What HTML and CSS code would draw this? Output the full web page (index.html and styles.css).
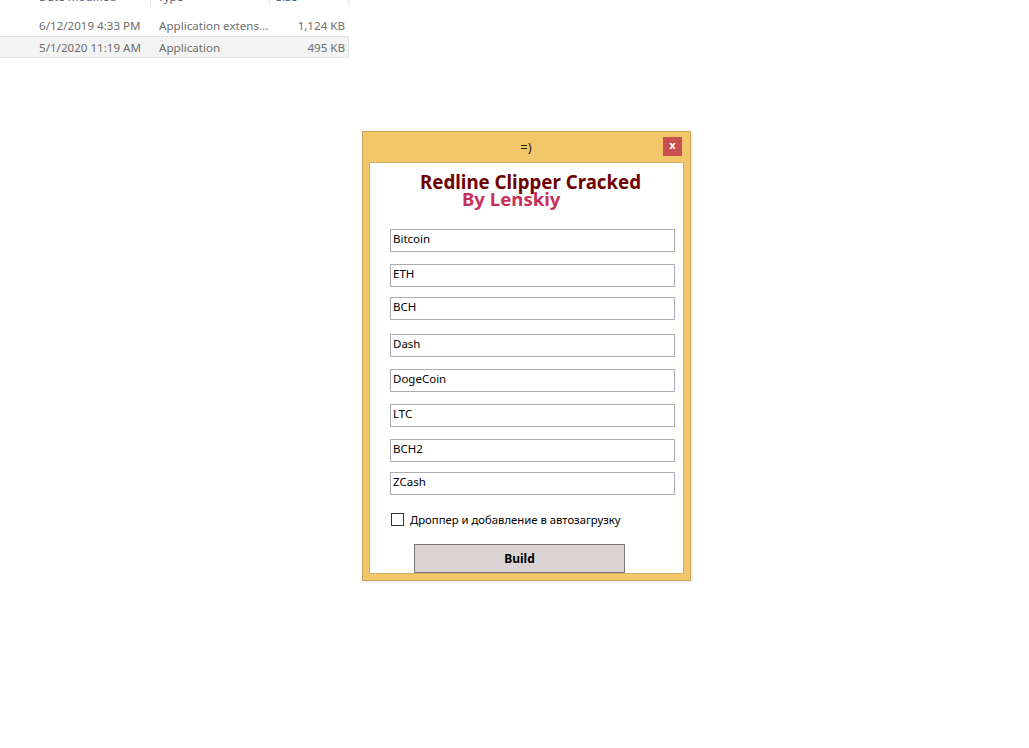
FILE: index.html
```html
<!DOCTYPE html>
<html>
<head>
<meta charset="utf-8">
<link rel="stylesheet" href="styles.css">
</head>
<body>
<div class="explorer">
  <div class="ex-header">
    <span class="col col-date">Date modified</span>
    <span class="col col-type">Type</span>
    <span class="col col-size">Size</span>
  </div>
  <div class="ex-row">
    <span class="col col-date">6/12/2019 4:33 PM</span>
    <span class="col col-type">Application extens...</span>
    <span class="col col-size">1,124 KB</span>
  </div>
  <div class="ex-row selected">
    <span class="col col-date">5/1/2020 11:19 AM</span>
    <span class="col col-type">Application</span>
    <span class="col col-size">495 KB</span>
  </div>
</div>

<div class="window">
  <div class="titlebar">
    <span class="title">=)</span>
    <span class="close">x</span>
  </div>
  <div class="client">
    <div class="heading">Redline Clipper Cracked</div>
    <div class="subheading">By Lenskiy</div>
    <div class="fields">
      <div class="field">Bitcoin</div>
      <div class="field g12">ETH</div>
      <div class="field g10">BCH</div>
      <div class="field g14">Dash</div>
      <div class="field g12">DogeCoin</div>
      <div class="field g12">LTC</div>
      <div class="field g12">BCH2</div>
      <div class="field g10">ZCash</div>
    </div>
    <label class="check"><span class="box"></span><span class="check-label">Дроппер и добавление в автозагрузку</span></label>
    <div class="build">Build</div>
  </div>
</div>
</body>
</html>
```

FILE: styles.css
```css
html, body {
  margin: 0;
  padding: 0;
  background: #ffffff;
  font-family: "Noto Sans", "Open Sans", sans-serif;
}

.explorer {
  margin-top: -7px;
  width: 349px;
  font-size: 11.6px;
  color: #6d6d6d;
}

.ex-header, .ex-row {
  display: flex;
  height: 22px;
  align-items: center;
  box-sizing: border-box;
}

.ex-header {
  height: 16px;
  color: #4c607a;
  align-items: flex-start;
}

.ex-header .col {
  border-right: 1px solid #e5e5e5;
  height: 12px;
  line-height: 8px;
}

.ex-row {
  margin-top: 5px;
}

.ex-row.selected {
  margin-top: 0;
  background: #f3f3f3;
  border: 1px solid #e2e2e2;
  border-left: none;
}

.col {
  box-sizing: border-box;
  white-space: nowrap;
}

.col-date {
  width: 153px;
  padding-left: 39px;
}

.col-type {
  width: 120px;
  padding-left: 6px;
}

.col-size {
  width: 72px;
  text-align: right;
}

.ex-header .col-size {
  width: 80px;
  text-align: left;
  padding-left: 6px;
}

.window {
  position: absolute;
  left: 362px;
  top: 131px;
  width: 329px;
  height: 450px;
  box-sizing: border-box;
  background: #f1c76a;
  border: 1px solid #c9a45b;
  padding: 0 6px 6px 6px;
  display: flex;
  flex-direction: column;
  box-shadow: 1px 1px 3px rgba(0, 0, 0, 0.12);
}

.titlebar {
  height: 30px;
  position: relative;
  display: flex;
  align-items: center;
  justify-content: center;
  flex: none;
}

.title {
  font-family: "Noto Sans", sans-serif;
  font-size: 13px;
  color: #1a1a1a;
  margin-left: -1px;
}

.close {
  position: absolute;
  right: 2px;
  top: 5px;
  width: 19px;
  height: 19px;
  background: #c75050;
  color: #ffffff;
  font-family: "DejaVu Sans", sans-serif;
  font-weight: bold;
  font-size: 10px;
  line-height: 17px;
  text-align: center;
}

.client {
  flex: 1;
  background: #ffffff;
  border: 1px solid #d3b066;
  overflow: hidden;
  display: flex;
  flex-direction: column;
}

.heading {
  margin-top: 8px;
  padding-left: 50px;
  font-size: 18.7px;
  font-weight: bold;
  line-height: 22px;
  color: #6e0000;
  white-space: nowrap;
}

.subheading {
  padding-left: 92px;
  font-size: 18.6px;
  font-weight: bold;
  line-height: 20px;
  color: #c8305c;
  margin-top: -4px;
}

.fields {
  display: flex;
  flex-direction: column;
  margin-top: 20px;
  padding-left: 20px;
}

.field {
  width: 285px;
  height: 23px;
  box-sizing: border-box;
  border: 1px solid #abadb3;
  font-size: 11.5px;
  line-height: 18px;
  padding-left: 2px;
  color: #000000;
}

.g10 { margin-top: 10px; }
.g12 { margin-top: 12px; }
.g14 { margin-top: 14px; }

.check {
  display: flex;
  align-items: center;
  margin-top: 18px;
  padding-left: 21px;
  height: 13px;
}

.box {
  width: 13px;
  height: 13px;
  box-sizing: border-box;
  border: 1px solid #333333;
  background: #ffffff;
  flex: none;
}

.check-label {
  font-size: 11.3px;
  margin-left: 6px;
  color: #000000;
  white-space: nowrap;
}

.build {
  margin-top: 18px;
  margin-left: 44px;
  width: 211px;
  height: 29px;
  flex: none;
  box-sizing: border-box;
  background: #d9d3d3;
  border: 1px solid #7a7a7a;
  font-size: 12px;
  font-weight: bold;
  line-height: 27px;
  text-align: center;
  color: #000000;
}
```
